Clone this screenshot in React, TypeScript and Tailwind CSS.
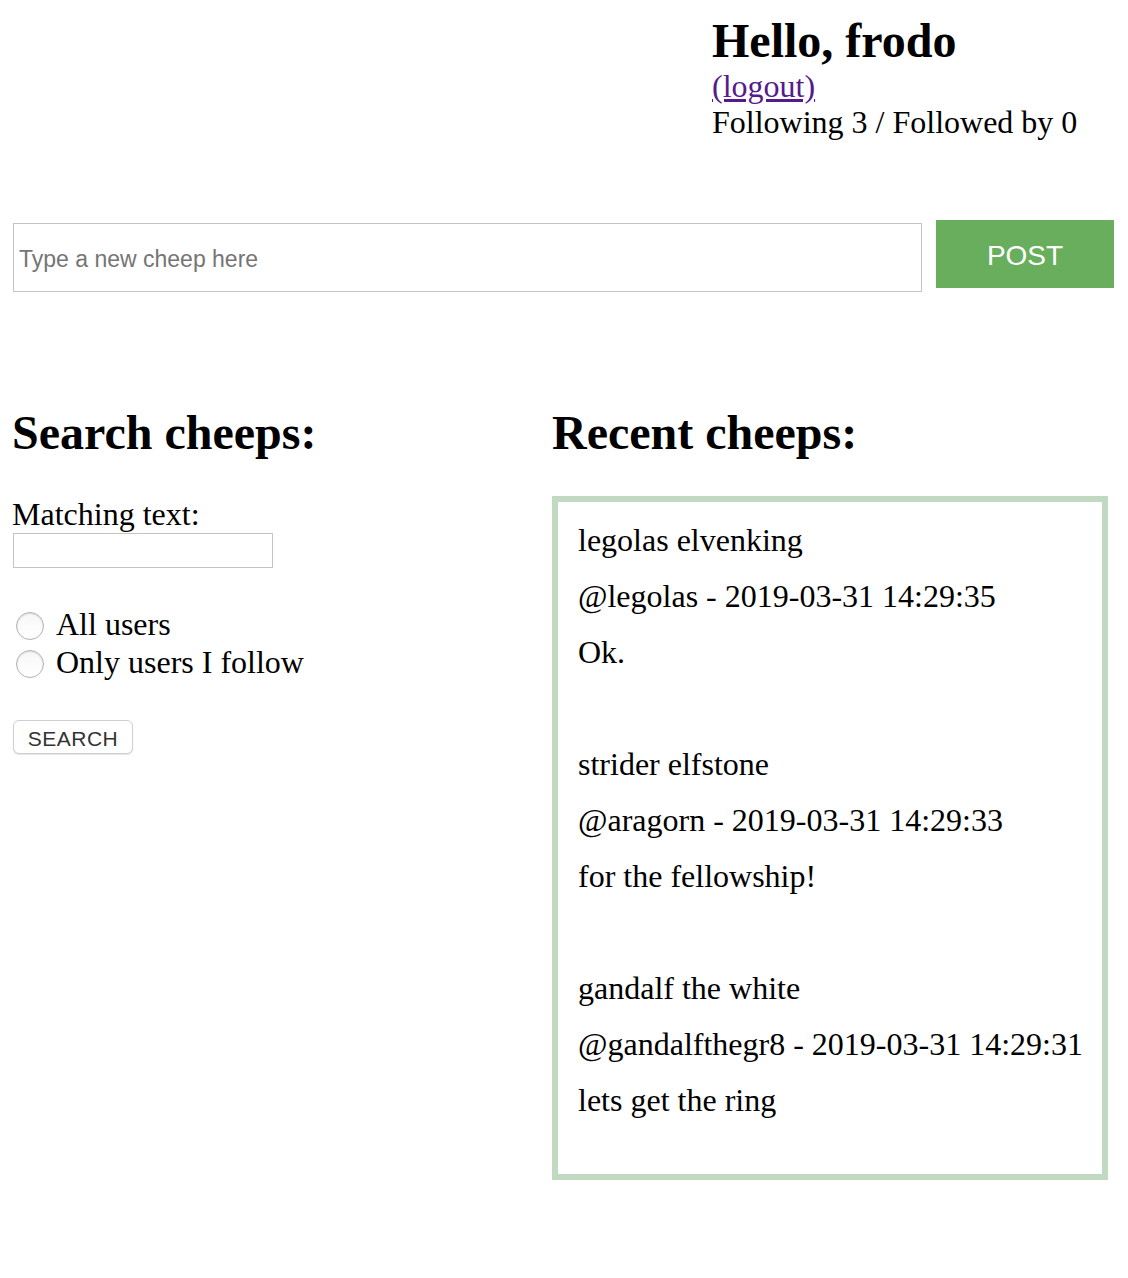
const serif = 'font-["Liberation_Serif","Times_New_Roman",serif]';

const CHEEPS = [
  { name: 'legolas elvenking', handle: 'legolas', time: '2019-03-31 14:29:35', text: 'Ok.' },
  { name: 'strider elfstone', handle: 'aragorn', time: '2019-03-31 14:29:33', text: 'for the fellowship!' },
  { name: 'gandalf the white', handle: 'gandalfthegr8', time: '2019-03-31 14:29:31', text: 'lets get the ring' },
];

function Radio({ label }: { label: string }) {
  return (
    <label className="flex items-center h-[38px] text-[32px] leading-[38px]">
      <input
        type="radio"
        name="scope"
        className="appearance-none ml-[4px] mt-[3px] w-[28px] h-[28px] rounded-full border border-[#b3b3b3] bg-gradient-to-b from-[#f7f7f7] to-white shadow-[inset_0_1px_2px_rgba(0,0,0,0.12)]"
      />
      <span className="ml-[12px]">{label}</span>
    </label>
  );
}

export default function App() {
  return (
    <div className={`${serif} bg-white text-black w-[1128px] min-h-[1278px] pl-[12px] pr-[14px] pt-[13px]`}>
      <header className="flex justify-end">
        <div className="w-[402px]">
          <h2 className="text-[48px] font-bold leading-[55px]">Hello, frodo</h2>
          <a href="#" className="block w-fit text-[32px] leading-[36px] text-[#551a8b] underline">
            (logout)
          </a>
          <p className="text-[32px] leading-[36px]">Following 3 / Followed by 0</p>
        </div>
      </header>

      <div className="flex items-start gap-[14px] mt-[80px]">
        <input
          type="text"
          placeholder="Type a new cheep here"
          className='ml-px mt-[3px] w-[909px] h-[69px] border border-[#c4c4c4] pl-[5px] pt-[4px] font-["Liberation_Sans",Arial,sans-serif] text-[23px] text-black placeholder:text-[#757575] outline-none'
        />
        <button className='w-[178px] h-[68px] pt-[3px] bg-[#68ae5d] text-white font-["Liberation_Sans",Arial,sans-serif] text-[28px]'>
          POST
        </button>
      </div>

      <main className="grid grid-cols-[540px_556px] mt-[113px]">
        <section>
          <h2 className="text-[48px] font-bold leading-[55px]">Search cheeps:</h2>
          <p className="mt-[36px] text-[32px] leading-[36px]">Matching text:</p>
          <input type="text" className="block ml-px mt-px w-[260px] h-[35px] border border-[#c4c4c4] outline-none" />
          <div className="mt-[37px]">
            <Radio label="All users" />
            <Radio label="Only users I follow" />
          </div>
          <button className='ml-px mt-[39px] w-[120px] h-[34px] pt-[2px] rounded-[6px] border border-[#cfcfcf] bg-white shadow-[0_1px_1px_rgba(0,0,0,0.1)] font-["Liberation_Sans",Arial,sans-serif] text-[21px] text-[#333] tracking-[0.5px]'>
            SEARCH
          </button>
        </section>

        <section>
          <h2 className="text-[48px] font-bold leading-[55px]">Recent cheeps:</h2>
          <div className="mt-[36px] border-[6px] border-[#c2d9c1] px-[20px]">
            {CHEEPS.map((c) => (
              <div key={c.handle}>
                <p className="my-[20px] text-[32px] leading-[36px]">{c.name}</p>
                <p className="my-[20px] text-[32px] leading-[36px] whitespace-nowrap">
                  @{c.handle} - {c.time}
                </p>
                <p className="my-[20px] text-[32px] leading-[36px]">{c.text}</p>
                <div className="h-[36px]" />
              </div>
            ))}
          </div>
        </section>
      </main>
    </div>
  );
}
